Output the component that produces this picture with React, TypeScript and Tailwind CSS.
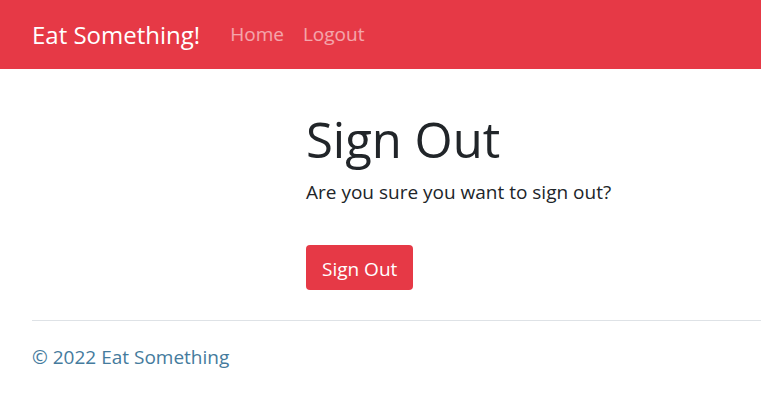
export default function App() {
  return (
    <div className="min-h-screen bg-white font-['Open_Sans',sans-serif] text-[#212529]">
      {/* Navbar */}
      <nav className="h-[69px] bg-[#e63946] flex items-center px-8">
        <span className="text-[24px] text-white mr-[30px]">Eat Something!</span>
        <a className="text-[19px] text-white/55 mr-[19px]">Home</a>
        <a className="text-[19px] text-white/55">Logout</a>
      </nav>

      {/* Main */}
      <main className="pl-[306px] pt-[41px] pb-[30px]">
        <h1 className="text-[49px] leading-[1.2] mb-[9px]">Sign Out</h1>
        <p className="text-[19px] mb-[39px]">Are you sure you want to sign out?</p>
        <button className="bg-[#e63946] text-white text-[19px] rounded-[4px] h-[45px] px-4 pt-[3px]">
          Sign Out
        </button>
      </main>

      {/* Footer */}
      <footer className="ml-8 border-t border-[#dee2e6] pt-[22px]">
        <p className="text-[#457b9d] text-[19px]">© 2022 Eat Something</p>
      </footer>
    </div>
  );
}
